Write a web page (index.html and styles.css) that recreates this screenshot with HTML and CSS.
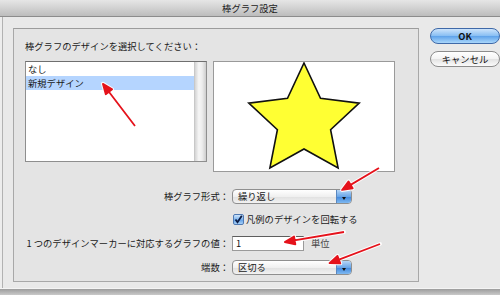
FILE: index.html
```html
<!DOCTYPE html>
<html lang="ja">
<head>
  <meta charset="UTF-8" />
  <title>棒グラフ設定</title>
  <link rel="stylesheet" href="styles.css">
</head>
<body>

  <div class="window">
    <div class="titlebar">棒グラフ設定</div>

    <div class="content">
      <div class="group">
        <div class="caption">棒グラフのデザインを選択してください：</div>

        <div class="design-row">
          <!-- リスト -->
          <div class="list">
            <ul class="list-items">
              <li>なし</li>
              <li class="selected">新規デザイン</li>
            </ul>
            <div class="scrollbar"></div>
          </div>

          <!-- プレビュー -->
          <div class="preview">
            <svg width="180" height="109" viewBox="1 1 180 109">
              <polygon class="star" points="91,2 107.5,37.3 146.2,42.1 117.6,68.7 125.1,106.9 91,88 56.9,106.9 64.4,68.7 35.8,42.1 74.5,37.3"/>
            </svg>
          </div>
        </div>

        <div class="form-grid">
          <span class="field-label">棒グラフ形式：</span>
          <div class="popup"><span class="popup-text">繰り返し</span><span class="popup-arrow"></span></div>

          <span></span>
          <label class="check">
            <span class="checkbox">
              <svg width="11" height="11" viewBox="0 0 11 11"><path d="M2.5 5.5L4.5 8.2L8.8 1.8" /></svg>
            </span>
            凡例のデザインを回転する
          </label>

          <span class="field-label">1 つのデザインマーカーに対応するグラフの値：</span>
          <div class="value-field"><input type="text" value="1"><span class="unit">単位</span></div>

          <span class="field-label">端数：</span>
          <div class="popup"><span class="popup-text">区切る</span><span class="popup-arrow"></span></div>
        </div>
      </div>

      <div class="buttons">
        <button class="btn btn-default">OK</button>
        <button class="btn">キャンセル</button>
      </div>
    </div>

    <div class="bottom-edge"></div>

    <!-- 注釈の矢印 -->
    <svg class="arrows" width="500" height="295" viewBox="0 0 500 295">
      <g transform="translate(135 126) rotate(-127.3)">
        <path class="glow" d="M0 0H45M53 0L43 -4L43 4Z"/>
        <path class="red" d="M0 0H45M53 0L43 -4L43 4Z"/>
      </g>
      <g transform="translate(379 168) rotate(149.3)">
        <path class="glow" d="M0 0H35M43 0L33 -4L33 4Z"/>
        <path class="red" d="M0 0H35M43 0L33 -4L33 4Z"/>
      </g>
      <g transform="translate(344 232) rotate(170.4)">
        <path class="glow" d="M0 0H52M60 0L50 -4L50 4Z"/>
        <path class="red" d="M0 0H52M60 0L50 -4L50 4Z"/>
      </g>
      <g transform="translate(380 244) rotate(159.2)">
        <path class="glow" d="M0 0H46M54 0L44 -4L44 4Z"/>
        <path class="red" d="M0 0H46M54 0L44 -4L44 4Z"/>
      </g>
    </svg>
  </div>

</body>
</html>
```

FILE: styles.css
```css
body {
  margin: 0;
  font-family: "Noto Sans CJK JP", "Noto Sans", sans-serif;
  font-size: 9.3px;
  color: #1a1a1a;
}

.window {
  position: relative;
  width: 500px;
  height: 295px;
  overflow: hidden;
  background: #e9e9e9;
  box-shadow: inset 2px 0 0 #ededed, inset 3px 0 0 #b2b2b2;
}

.titlebar {
  height: 16px;
  line-height: 16px;
  text-align: center;
  color: #222;
  background: linear-gradient(#e6e6e6, #bdbdbd);
  border-bottom: 1px solid #8c8c8c;
}

.content {
  display: flex;
  align-items: flex-start;
  padding: 11px 0 0 13px;
}

.group {
  width: 391px;
  height: 252px;
  background: #e4e4e4;
  border: 1px solid #a8a8a8;
  border-top-color: #9c9c9c;
  padding: 0 9px 0 11px;
  box-sizing: content-box;
}

.caption {
  line-height: 12px;
  margin-top: 11px;
}

.design-row {
  display: flex;
  align-items: flex-start;
  gap: 6px;
  margin-top: 9px;
}

.list {
  display: flex;
  width: 182px;
  height: 101px;
  box-sizing: border-box;
  border: 1px solid #8e8e8e;
  border-top-color: #6f6f6f;
  background: white;
}

.list-items {
  flex: 1;
  list-style: none;
  margin: 0;
  padding: 0;
}

.list-items li {
  height: 14px;
  line-height: 14px;
  padding-left: 2px;
}

.list-items li.selected {
  background: #b5d5ff;
}

.scrollbar {
  width: 11px;
  background: linear-gradient(to right, #d4d4d4, #f6f6f6 35%, #ececec 65%, #cdcdcd);
  border-left: 1px solid #c8c8c8;
}

.preview {
  width: 182px;
  height: 111px;
  box-sizing: border-box;
  border: 1px solid #9a9a9a;
  background: white;
}

.preview svg {
  display: block;
}

.star {
  fill: #ffff33;
  stroke: #111;
  stroke-width: 1.6;
  stroke-linejoin: miter;
}

.form-grid {
  display: grid;
  grid-template-columns: 204px auto;
  grid-template-rows: 22px 24px 24px 24px;
  column-gap: 3px;
  align-items: center;
  margin-top: 13px;
}

.field-label {
  text-align: right;
}

.popup {
  display: flex;
  width: 120px;
  height: 15px;
  box-sizing: border-box;
  border: 1px solid #8f8f8f;
  border-radius: 4px;
  background: linear-gradient(#ffffff, #f0f0f0 50%, #e0e0e0 51%, #f2f2f2);
  overflow: hidden;
}

.popup-text {
  flex: 1;
  line-height: 13px;
  padding-left: 5px;
}

.popup-arrow {
  position: relative;
  width: 14px;
  background: linear-gradient(#b6d6f7, #6aa6e8 50%, #3f86dc 51%, #7fb9f1);
  border-left: 1px solid #5a87bf;
}

.popup-arrow::after {
  content: "";
  position: absolute;
  left: 5px;
  top: 7px;
  border-left: 2px solid transparent;
  border-right: 2px solid transparent;
  border-top: 3px solid #111;
}

.check {
  display: flex;
  align-items: center;
  gap: 2px;
  margin-left: 1px;
}

.checkbox {
  width: 11px;
  height: 11px;
  box-sizing: border-box;
  border: 1px solid #4f79b3;
  border-radius: 2px;
  background: linear-gradient(#cfe5fb, #7db4ee 50%, #5d9de6 51%, #a6d0f7);
}

.checkbox svg {
  display: block;
  margin: -1px;
}

.checkbox path {
  fill: none;
  stroke: #0d1d44;
  stroke-width: 1.8;
}

.value-field {
  display: flex;
  align-items: center;
  gap: 7px;
}

.value-field input {
  width: 72px;
  height: 15px;
  box-sizing: border-box;
  border: 1px solid #9a9a9a;
  border-top-color: #5e5e5e;
  padding: 0 3px;
  font: inherit;
  color: #111;
  background: white;
  outline: none;
}

.unit {
  color: #444;
}

.buttons {
  display: flex;
  flex-direction: column;
  gap: 7px;
  margin-left: 11px;
}

.btn {
  width: 70px;
  height: 16px;
  padding: 0;
  font: inherit;
  color: #111;
  border-radius: 8px;
  border: 1px solid #8c8c8c;
  background: linear-gradient(#ffffff, #f3f3f3 50%, #e2e2e2 51%, #fbfbfb);
  line-height: 14px;
}

.btn-default {
  font-weight: bold;
  border-color: #3f69a8;
  background: linear-gradient(#cde4fb, #86bdf3 50%, #5ea2ea 51%, #a9d6fb);
}

.bottom-edge {
  position: absolute;
  left: 0;
  right: 0;
  bottom: 0;
  height: 6px;
  border-top: 1px solid #f4f4f4;
  background: linear-gradient(#9c9c9c, #c9c9c9);
}

.arrows {
  position: absolute;
  left: 0;
  top: 0;
  pointer-events: none;
}

.arrows .glow {
  fill: #fff;
  stroke: #fff;
  stroke-width: 4;
  stroke-linejoin: round;
  stroke-linecap: round;
  opacity: 0.9;
}

.arrows .red {
  fill: #e5121b;
  stroke: #e5121b;
  stroke-width: 1.8;
  stroke-linejoin: round;
}
```
